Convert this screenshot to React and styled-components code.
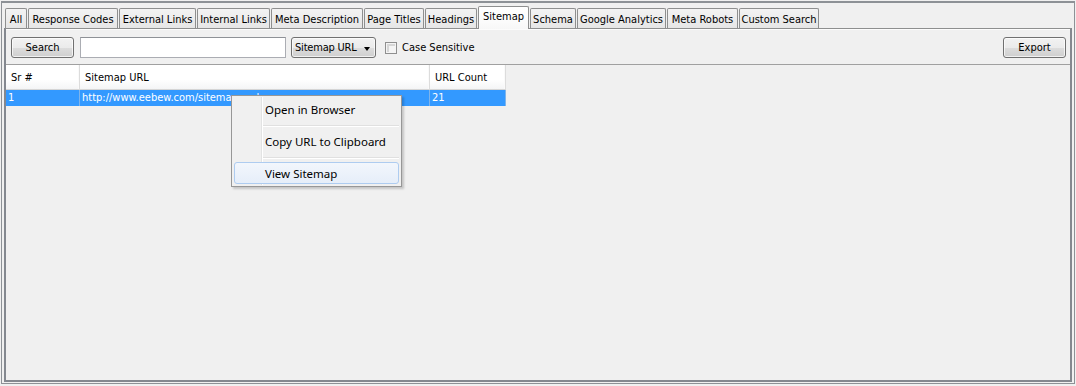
import React from "react";
import styled, { createGlobalStyle, css } from "styled-components";

const Global = createGlobalStyle`
  html, body { margin: 0; padding: 0; background: #f0f0f0; }
  body {
    font-family: "DejaVu Sans Condensed", "DejaVu Sans", sans-serif;
    font-size: 11px;
    color: #000;
  }
  * { box-sizing: border-box; }
`;

const Screen = styled.div`
  position: relative;
  width: 1076px;
  height: 386px;
  padding: 1px 1px 2px 1px;
  background: #f0f0f0;
  display: flex;
`;

const Frame = styled.div`
  flex: 1;
  display: flex;
  flex-direction: column;
  border: 1px solid #8d9196;
  border-top-width: 2px;
  padding: 0 2px 1px 2px;
`;

const TabStrip = styled.div`
  height: 25px;
  display: flex;
  align-items: flex-end;
  gap: 1px;
  padding-left: 1px;
  position: relative;
  z-index: 2;
`;

const Tab = styled.div`
  width: ${(p) => p.$w}px;
  height: 20px;
  border: 1px solid #8e8f8f;
  border-bottom: none;
  border-radius: 2px 2px 0 0;
  background: linear-gradient(#f3f3f3, #e6e6e6);
  display: flex;
  align-items: center;
  justify-content: center;
  padding-top: 1px;
  white-space: nowrap;
  ${(p) =>
    p.$active &&
    css`
      height: 23px;
      margin-bottom: -1px;
      background: linear-gradient(#ffffff, #fbfbfb 70%, #f7f7f7);
      padding-top: 0;
      padding-bottom: 4px;
    `}
`;

const Panel = styled.div`
  flex: 1;
  display: flex;
  flex-direction: column;
  border: 2px solid #84888f;
  border-top: 1px solid #8e8f8f;
  box-shadow: inset 0 1px 0 #fcfcfc;
`;

const Toolbar = styled.div`
  height: 35px;
  display: flex;
  align-items: center;
  padding: 8px 4px 6px 5px;
`;

const Button = styled.button`
  width: ${(p) => p.$w}px;
  height: 21px;
  margin: 0;
  padding: 0;
  font: inherit;
  color: #000;
  border: 1px solid #707070;
  border-radius: 3px;
  background: linear-gradient(#f2f2f2 0%, #ebebeb 50%, #dddddd 51%, #cfcfcf 100%);
  box-shadow: inset 0 0 0 1px rgba(255, 255, 255, 0.7);
  margin-right: ${(p) => p.$mr || 0}px;
`;

const TextInput = styled.div`
  width: 206px;
  height: 21px;
  background: #fff;
  border: 1px solid #abadb3;
  border-top-color: #8e9196;
  margin-right: 5px;
`;

const Combo = styled.div`
  width: 85px;
  height: 21px;
  display: flex;
  align-items: center;
  justify-content: space-between;
  padding: 0 5px 0 3px;
  border: 1px solid #707070;
  border-radius: 3px;
  background: linear-gradient(#f2f2f2 0%, #ebebeb 50%, #dddddd 51%, #cfcfcf 100%);
  box-shadow: inset 0 0 0 1px rgba(255, 255, 255, 0.7);
  margin-right: 9px;
  white-space: nowrap;
  letter-spacing: -0.2px;
`;

const Arrow = styled.span`
  flex: none;
  width: 0;
  height: 0;
  border-left: 3.5px solid transparent;
  border-right: 3.5px solid transparent;
  border-top: 4px solid #000;
  margin-top: 2px;
`;

const CheckLabel = styled.label`
  display: flex;
  align-items: center;
  gap: 5px;
`;

const CheckBox = styled.span`
  width: 12px;
  height: 12px;
  border: 1px solid #8f8f8f;
  background: #f4f4f4;
  box-shadow: inset 0 0 0 1px #f4f4f4, inset 1px 1px 0 2px #d6d6d6;
`;

const Spacer = styled.div`
  flex: 1;
`;

const TablePane = styled.div`
  flex: 1;
  border-top: 1px solid #a0a0a0;
  background: #f0f0f0;
  display: flex;
  flex-direction: column;
  align-items: flex-start;
`;

const HeaderRow = styled.div`
  display: flex;
  height: 25px;
`;

const HeaderCell = styled.div`
  width: ${(p) => p.$w}px;
  height: 25px;
  padding-left: 5px;
  display: flex;
  align-items: center;
  background: linear-gradient(#ffffff, #ffffff 60%, #f4f5f6);
  border-right: 1px solid #dcdcdc;
  border-bottom: 1px solid #d5d5d5;
  box-shadow: inset -1px 0 0 #fafafa;
`;

const DataRow = styled.div`
  display: flex;
  height: 16px;
  background: #3399ff;
  color: #fff;
`;

const DataCell = styled.div`
  width: ${(p) => p.$w}px;
  padding-left: 2px;
  line-height: 16px;
  white-space: nowrap;
  overflow: hidden;
  border-right: 1px solid #7fb4ea;
`;

const Menu = styled.div`
  position: absolute;
  left: 231px;
  top: 95px;
  width: 171px;
  height: 92px;
  padding: 2px;
  border: 1px solid #979797;
  background: #f0f0f0;
  box-shadow: 2px 2px 2px rgba(0, 0, 0, 0.18);
  display: flex;
  flex-direction: column;
  z-index: 5;
  font-family: "Noto Sans", "Open Sans", sans-serif;
  font-size: 11.5px;
  &::before {
    content: "";
    position: absolute;
    left: 29px;
    top: 1px;
    bottom: 1px;
    width: 1px;
    background: #e2e3e3;
    box-shadow: 1px 0 0 #ffffff;
  }
`;

const MenuItem = styled.div`
  position: relative;
  z-index: 1;
  height: 22px;
  display: flex;
  align-items: center;
  padding-left: 30px;
  border: 1px solid transparent;
  border-radius: 3px;
  ${(p) =>
    p.$hover &&
    css`
      border-color: #aeccf0;
      background: linear-gradient(#f2f6fc, #e6eef9);
    `}
`;

const MenuSep = styled.div`
  height: 10px;
  margin-left: 28px;
  display: flex;
  align-items: center;
  &::after {
    content: "";
    flex: 1;
    height: 1px;
    background: #e0e0e0;
    box-shadow: 0 1px 0 #ffffff;
  }
`;

const tabs = [
  ["All", 22],
  ["Response Codes", 90],
  ["External Links", 77],
  ["Internal Links", 73],
  ["Meta Description", 92],
  ["Page Titles", 60],
  ["Headings", 52],
  ["Sitemap", 51, true],
  ["Schema", 46],
  ["Google Analytics", 89],
  ["Meta Robots", 71],
  ["Custom Search", 80],
];

const cols = [
  ["Sr #", 74],
  ["Sitemap URL", 350],
  ["URL Count", 76],
];

const row = ["1", "http://www.eebew.com/sitemap.xml", "21"];

export default function App() {
  return (
    <>
      <Global />
      <Screen>
        <Frame>
          <TabStrip>
            {tabs.map(([label, w, active]) => (
              <Tab key={label} $w={w} $active={active}>
                {label}
              </Tab>
            ))}
          </TabStrip>
          <Panel>
            <Toolbar>
              <Button $w={63} $mr={6}>Search</Button>
              <TextInput />
              <Combo>
                <span>Sitemap URL</span>
                <Arrow />
              </Combo>
              <CheckLabel>
                <CheckBox />
                <span>Case Sensitive</span>
              </CheckLabel>
              <Spacer />
              <Button $w={63}>Export</Button>
            </Toolbar>
            <TablePane>
              <HeaderRow>
                {cols.map(([label, w]) => (
                  <HeaderCell key={label} $w={w}>
                    {label}
                  </HeaderCell>
                ))}
              </HeaderRow>
              <DataRow>
                {row.map((v, i) => (
                  <DataCell key={i} $w={cols[i][1]}>
                    {v}
                  </DataCell>
                ))}
              </DataRow>
            </TablePane>
          </Panel>
        </Frame>
        <Menu>
          <MenuItem>Open in Browser</MenuItem>
          <MenuSep />
          <MenuItem>Copy URL to Clipboard</MenuItem>
          <MenuSep />
          <MenuItem $hover>View Sitemap</MenuItem>
        </Menu>
      </Screen>
    </>
  );
}
